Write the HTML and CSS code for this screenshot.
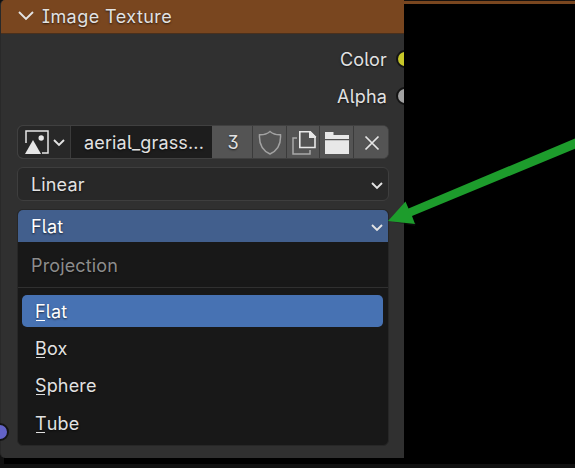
FILE: index.html
```html
<!DOCTYPE html>
<html lang="en">
<head>
<meta charset="utf-8">
<title>Image Texture</title>
<link rel="stylesheet" href="styles.css">
</head>
<body>
<main class="editor">
  <section class="node">
    <header class="node-header">
      <svg class="collapse" width="18" height="12" viewBox="0 0 18 12"><path d="M2 2l7 7 7-7"/></svg>
      <h1>Image Texture</h1>
    </header>
    <div class="outputs">
      <div class="output">Color<i class="socket yellow"></i></div>
      <div class="output">Alpha<i class="socket gray"></i></div>
    </div>
    <div class="controls">
      <div class="datablock">
        <button class="browse">
          <svg width="24" height="24" viewBox="0 0 24 24"><path d="M1 13V1h22v22h-6" fill="none" stroke="#e6e6e6" stroke-width="1.5"/><path d="M0 24L8 10l8 14z" fill="#e6e6e6"/><circle cx="16.2" cy="8" r="2.7" fill="#e6e6e6"/></svg>
          <svg class="chevron" width="14" height="10" viewBox="0 0 14 10"><path d="M2 2l5 5 5-5"/></svg>
        </button>
        <div class="name">aerial_grass...</div>
        <button class="users">3</button>
        <button class="shield"><svg width="24" height="26" viewBox="0 0 24 26"><path d="M12 1.5C9 4 5 5 1.500 4.800C1 13 3.500 20 12 24C20.500 20 23 13 22.500 4.800C19 5 15 4 12 1.500z" fill="none" stroke="#a2a2a2" stroke-width="1.5"/></svg></button>
        <button class="copy"><svg width="26" height="26" viewBox="0 0 26 26"><path d="M6 8H2v16h17v-4" fill="none" stroke="#a8a8a8" stroke-width="1.5"/><path d="M8.800 1.800H19l5 5V17.500H8.800z" fill="none" stroke="#e8e8e8" stroke-width="1.6"/><path d="M18 1h1.500L25 6.500V8h-7z" fill="#e8e8e8"/></svg></button>
        <button class="folder"><svg width="24" height="24" viewBox="0 0 24 24"><path d="M0 8V1h8.500v3H24v4zM0 9.300h24V23H0z" fill="#e8e8e8"/></svg></button>
        <button class="unlink"><svg width="16" height="16" viewBox="0 0 16 16"><path d="M1.500 1.500l13 13M14.500 1.500l-13 13" stroke="#e6e6e6" stroke-width="1.7"/></svg></button>
      </div>
      <div class="select">Linear<svg class="chevron" width="14" height="10" viewBox="0 0 14 10"><path d="M2 2l5 5 5-5"/></svg></div>
      <div class="dropdown">
        <div class="current">Flat<svg class="chevron" width="14" height="10" viewBox="0 0 14 10"><path d="M2 2l5 5 5-5"/></svg></div>
        <div class="menu-title">Projection</div>
        <ul class="menu">
          <li class="active"><span class="key">F</span>lat</li>
          <li><span class="key">B</span>ox</li>
          <li><span class="key">S</span>phere</li>
          <li><span class="key">T</span>ube</li>
        </ul>
      </div>
    </div>
  </section>
  <div class="backdrop"></div>
  <i class="socket vector"></i>
  <svg class="arrow" width="195" height="100" viewBox="0 0 195 100">
    <path d="M5 92l22 4 1-3z" fill="#141414" opacity=".5"/>
    <path d="M0 91L17.500 71.500L20.500 78.500L187 8.500L195 8.500V15.500L24 86L27 94z" fill="#1d9c2c"/>
  </svg>
</main>
</body>
</html>
```
FILE: styles.css
```css
* { box-sizing: border-box; }
body { margin: 0; background: #111; }
.editor {
  position: relative;
  display: grid;
  grid-template-columns: 404px 1fr;
  width: 575px;
  height: 468px;
  overflow: hidden;
  background: linear-gradient(90deg, #111 4px, #000 4px) 0 0 / 100% 464px no-repeat #111;
  font: 18px/24px Inter, "Liberation Sans", sans-serif;
  font-feature-settings: "cv05", "cv08", "cv09";
  letter-spacing: .15px;
  color: #e2e2e2;
  text-shadow: 0 1px 2px rgba(0, 0, 0, .65);
}
.node {
  height: 458px;
  overflow: hidden;
  background: #303030;
  border-left: 1px solid #292929;
  border-radius: 5px 0 0 5px;
}
.node-header {
  display: flex;
  align-items: center;
  gap: 7px;
  height: 34px;
  padding: 0 0 1px 16px;
  background: #79461f;
  border-bottom: 1px solid #49301d;
}
h1 {
  margin: 0;
  padding-top: 2px;
  font-size: inherit;
  font-weight: inherit;
  letter-spacing: .45px;
}
svg { display: block; flex: none; }
.collapse path, .chevron path { fill: none; stroke: #e3e3e3; stroke-width: 1.9; }
.outputs { height: 91px; padding-top: 7px; }
.output {
  display: flex;
  align-items: center;
  justify-content: flex-end;
  gap: 9px;
  height: 37px;
}
.socket {
  width: 18px;
  height: 18px;
  border: 2px solid #141414;
  border-radius: 50%;
}
.output .socket { margin: -2px -10px 0 0; }
.yellow { background: #c7c729; }
.gray { background: #a1a1a1; }
.vector { position: absolute; left: -9px; top: 423px; background: #6363c7; }
.controls { display: grid; gap: 8px; margin: 0 15px 0 16px; }
.datablock {
  display: grid;
  grid-template-columns: 53px 141px 41px 34px 33px 34px 1fr;
  height: 34px;
  overflow: hidden;
  border: 1px solid #404040;
  border-radius: 6px;
  background: #545454;
}
button {
  display: flex;
  align-items: center;
  justify-content: center;
  padding: 1px 0 0 1px;
  border: 0;
  border-right: 1px solid #3b3b3b;
  background: #545454;
  color: inherit;
  font: inherit;
  font-feature-settings: inherit;
  text-shadow: inherit;
}
.users { padding-left: 2px; }
.browse { gap: 3px; padding: 0 0 0 2px; background: #282828; }
.name { padding: 5px 0 0 13px; background: #1d1d1d; white-space: nowrap; }
.unlink { border-right: 0; }
.select, .current {
  display: flex;
  align-items: center;
  justify-content: space-between;
  padding: 2px 4px 0 13px;
}
.select {
  height: 34px;
  border: 1px solid #3e3e3e;
  border-radius: 6px;
  background: #282828;
}
.dropdown {
  height: 237px;
  margin-bottom: 12px;
  border: 1px solid #272727;
  border-radius: 6px;
  background: #181818;
  overflow: hidden;
}
.current { height: 32px; background: #425f8d; color: #fff; }
.chevron { margin-top: 1px; }
.browse .chevron { margin-top: 2px; }
.menu-title {
  height: 46px;
  padding: 12px 13px 0;
  border-bottom: 1px solid #303030;
  color: #8c8c8c;
}
.menu { margin: 0; padding: 7px 5px 7px 4px; list-style: none; }
.menu li { height: 32px; margin-bottom: 5.200px; padding: 5px 13px 3px; border-radius: 5px; }
.menu .active { background: #4772b3; color: #fff; }
.key {
  display: inline-block;
  height: 22px;
  background: linear-gradient(currentColor, currentColor) 1px 20px / 9px 1px no-repeat;
}
.backdrop { height: 464px; border-top: 1px solid #18120e; background: linear-gradient(#79461f 3px, #000 3px); }
.arrow { position: absolute; left: 388px; top: 130px; }
```
